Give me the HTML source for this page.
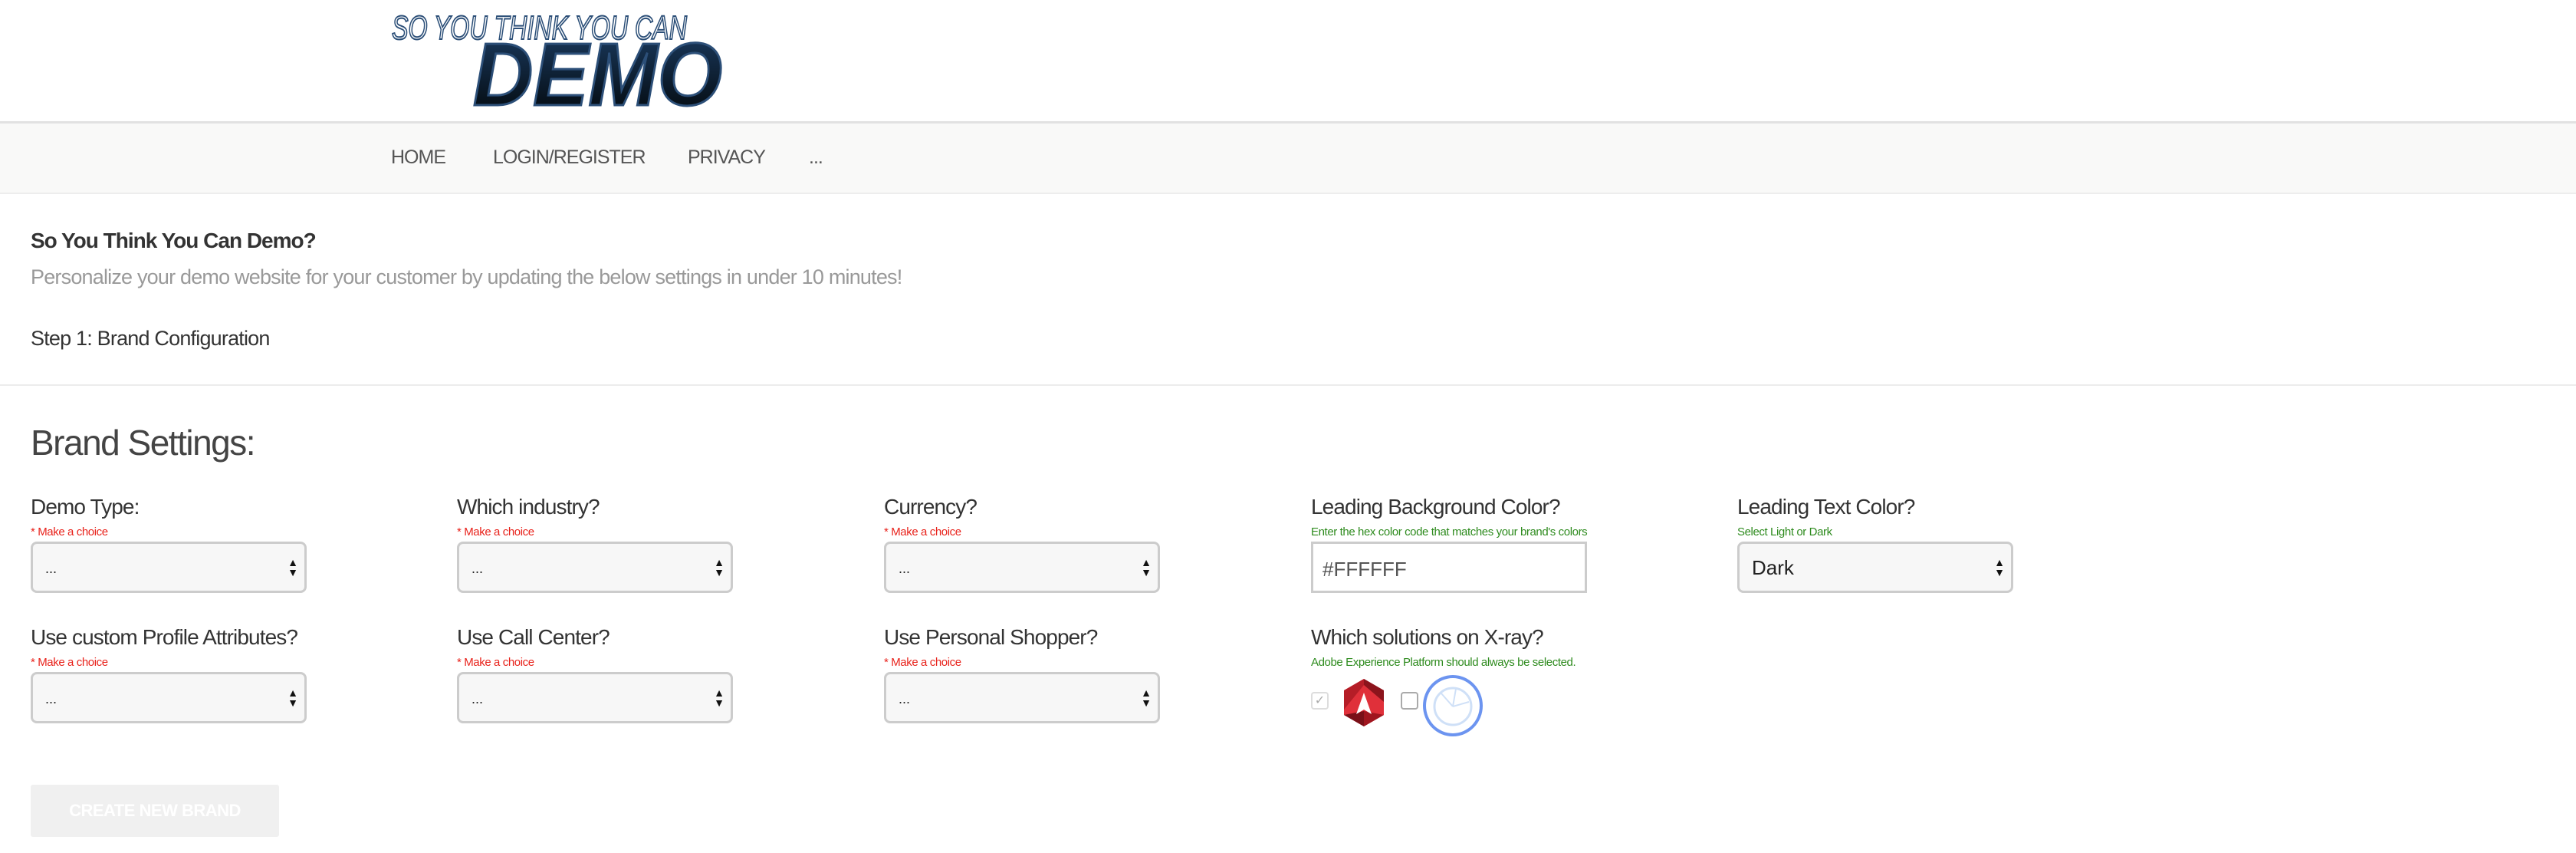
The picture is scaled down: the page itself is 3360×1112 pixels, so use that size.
<!DOCTYPE html>
<html><head><meta charset="utf-8"><style>
*{box-sizing:border-box;margin:0;padding:0}
body{width:3360px;height:1112px;background:#fff;font-family:"Liberation Sans",sans-serif;color:#333;position:relative;overflow:hidden}
.a{position:absolute;white-space:nowrap}
.nav{position:absolute;left:0;top:158px;width:3360px;height:95px;background:#f9f9f8;border-top:3px solid #e2e2e2;border-bottom:2px solid #ededed}
.nav span{position:absolute;top:30px;font-size:25px;color:#555;letter-spacing:-1px}
.lbl{font-size:28px;color:#333;letter-spacing:-0.9px}
.req{font-size:15px;color:#e8221b;letter-spacing:-0.4px}
.hint{font-size:15px;color:#2e8b1e;letter-spacing:-0.4px}
.sel{position:absolute;width:360px;height:67px;background:#f7f7f7;border:3px solid #ccc;border-radius:8px}
.sel .v{position:absolute;left:16px;top:22px;font-size:18px;color:#222}
.sel .ar{position:absolute;right:8px;top:18px;font-size:14px;line-height:13px;color:#111}
</style></head><body>
<svg class="a" style="left:505px;top:10px" width="450" height="135">
<text x="6" y="41" font-family="Liberation Sans" font-style="italic" font-size="44" fill="#fff" stroke="#2c4f78" stroke-width="2" textLength="385" lengthAdjust="spacingAndGlyphs">SO YOU THINK YOU CAN</text>
<defs><linearGradient id="g" x1="0" y1="0" x2="0" y2="1"><stop offset="0" stop-color="#1b3c62"/><stop offset="1" stop-color="#020608"/></linearGradient></defs>
<text x="112" y="127" font-family="Liberation Sans" font-weight="bold" font-style="italic" font-size="116" fill="url(#g)" stroke="#2c4f78" stroke-width="3" textLength="325" lengthAdjust="spacingAndGlyphs">DEMO</text>
</svg>
<div class="nav"><span style="left:510px">HOME</span><span style="left:643px">LOGIN/REGISTER</span><span style="left:897px">PRIVACY</span><span style="left:1055px">...</span></div>
<div class="a" style="left:40px;top:298px;font-size:28px;font-weight:bold;letter-spacing:-1px">So You Think You Can Demo?</div>
<div class="a" style="left:40px;top:346px;font-size:27px;color:#999;letter-spacing:-0.8px">Personalize your demo website for your customer by updating the below settings in under 10 minutes!</div>
<div class="a" style="left:40px;top:426px;font-size:27px;letter-spacing:-0.8px">Step 1: Brand Configuration</div>
<div class="a" style="left:0;top:501px;width:3360px;height:2px;background:#ececec"></div>
<div class="a" style="left:40px;top:550px;font-size:46px;color:#444;font-weight:300;letter-spacing:-1.5px">Brand Settings:</div>

<div class="a lbl" style="left:40px;top:645px">Demo Type:</div>
<div class="a req" style="left:40px;top:685px">* Make a choice</div>
<div class="sel" style="left:40px;top:706px"><span class="v">...</span><span class="ar">▲<br>▼</span></div>

<div class="a lbl" style="left:596px;top:645px">Which industry?</div>
<div class="a req" style="left:596px;top:685px">* Make a choice</div>
<div class="sel" style="left:596px;top:706px"><span class="v">...</span><span class="ar">▲<br>▼</span></div>

<div class="a lbl" style="left:1153px;top:645px">Currency?</div>
<div class="a req" style="left:1153px;top:685px">* Make a choice</div>
<div class="sel" style="left:1153px;top:706px"><span class="v">...</span><span class="ar">▲<br>▼</span></div>

<div class="a lbl" style="left:1710px;top:645px">Leading Background Color?</div>
<div class="a hint" style="left:1710px;top:685px">Enter the hex color code that matches your brand's colors</div>
<div class="a" style="left:1710px;top:706px;width:360px;height:67px;border:3px solid #ccc;background:#fff"><span style="position:absolute;left:12px;top:18px;font-size:26px;color:#555">#FFFFFF</span></div>

<div class="a lbl" style="left:2266px;top:645px">Leading Text Color?</div>
<div class="a hint" style="left:2266px;top:685px">Select Light or Dark</div>
<div class="sel" style="left:2266px;top:706px"><span class="v" style="top:16px;font-size:26px">Dark</span><span class="ar">▲<br>▼</span></div>

<div class="a lbl" style="left:40px;top:815px">Use custom Profile Attributes?</div>
<div class="a req" style="left:40px;top:855px">* Make a choice</div>
<div class="sel" style="left:40px;top:876px"><span class="v">...</span><span class="ar">▲<br>▼</span></div>

<div class="a lbl" style="left:596px;top:815px">Use Call Center?</div>
<div class="a req" style="left:596px;top:855px">* Make a choice</div>
<div class="sel" style="left:596px;top:876px"><span class="v">...</span><span class="ar">▲<br>▼</span></div>

<div class="a lbl" style="left:1153px;top:815px">Use Personal Shopper?</div>
<div class="a req" style="left:1153px;top:855px">* Make a choice</div>
<div class="sel" style="left:1153px;top:876px"><span class="v">...</span><span class="ar">▲<br>▼</span></div>

<div class="a lbl" style="left:1710px;top:815px">Which solutions on X-ray?</div>
<div class="a hint" style="left:1710px;top:855px">Adobe Experience Platform should always be selected.</div>
<div class="a" style="left:1710px;top:902px;width:23px;height:23px;border:2px solid #ddd;border-radius:4px;color:#aaa;font-size:16px;text-align:center;line-height:19px">✓</div>
<svg class="a" style="left:1751px;top:885px" width="56" height="62" viewBox="0 0 56 62">
<polygon points="28,0 54,15 54,47 28,62 2,47 2,15" fill="#e0303a"/>
<polygon points="28,0 54,15 54,30 28,8" fill="#8c141c"/>
<polygon points="28,0 2,15 2,40 28,8" fill="#b51d27"/>
<polygon points="2,47 28,62 28,42" fill="#7a1018"/>
<polygon points="54,47 28,62 28,42" fill="#a0161f"/>
<polygon points="28,18 38,46 28,40 18,46" fill="#fff"/>
</svg>
<div class="a" style="left:1827px;top:902px;width:23px;height:23px;border:2px solid #aaa;border-radius:4px"></div>
<div class="a" style="left:1856px;top:880px;width:78px;height:80px;border:4px solid #6c94f0;border-radius:50%"></div>
<svg class="a" style="left:1866px;top:892px" width="58" height="58"><circle cx="29" cy="29" r="24" fill="none" stroke="#cfe0f7" stroke-width="3"/><path d="M29 29 L33 6 M29 29 L50 23 M29 29 L14 12" stroke="#cfe0f7" stroke-width="2"/></svg>

<div class="a" style="left:40px;top:1023px;width:324px;height:68px;background:#f0f0f0;border-radius:3px;color:#fff;font-size:22px;font-weight:bold;text-align:center;line-height:68px;letter-spacing:-0.5px">CREATE NEW BRAND</div>
</body></html>
